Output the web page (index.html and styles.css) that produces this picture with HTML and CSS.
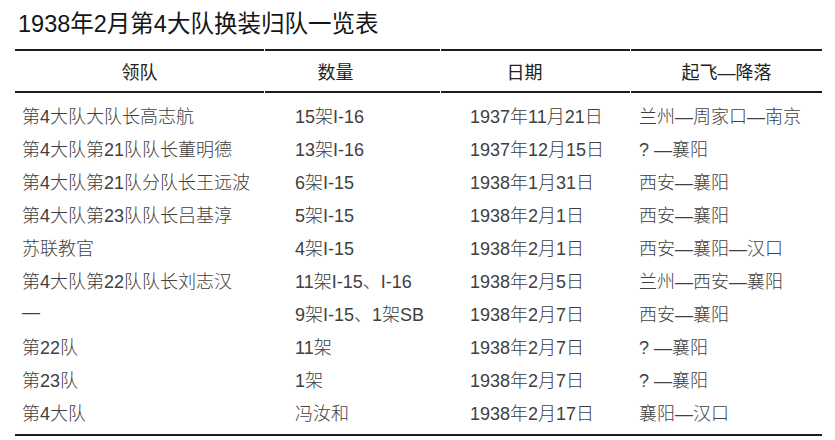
FILE: index.html
```html
<!DOCTYPE html>
<html lang="zh-CN">
<head>
<meta charset="utf-8">
<title>1938年2月第4大队换装归队一览表</title>
<link rel="stylesheet" href="styles.css">
</head>
<body>
<div class="page">
  <h1 class="title">1938年2月第4大队换装归队一览表</h1>
  <div class="table">
    <div class="row head">
      <div class="cell c1">领队</div>
      <div class="cell c2">数量</div>
      <div class="cell c3">日期</div>
      <div class="cell c4">起飞—降落</div>
    </div>
    <div class="body">
      <div class="row"><div class="cell c1">第4大队大队长高志航</div><div class="cell c2">15架I-16</div><div class="cell c3">1937年11月21日</div><div class="cell c4">兰州—周家口—南京</div></div>
      <div class="row"><div class="cell c1">第4大队第21队队长董明德</div><div class="cell c2">13架I-16</div><div class="cell c3">1937年12月15日</div><div class="cell c4">? —襄阳</div></div>
      <div class="row"><div class="cell c1">第4大队第21队分队长王远波</div><div class="cell c2">6架I-15</div><div class="cell c3">1938年1月31日</div><div class="cell c4">西安—襄阳</div></div>
      <div class="row"><div class="cell c1">第4大队第23队队长吕基淳</div><div class="cell c2">5架I-15</div><div class="cell c3">1938年2月1日</div><div class="cell c4">西安—襄阳</div></div>
      <div class="row"><div class="cell c1">苏联教官</div><div class="cell c2">4架I-15</div><div class="cell c3">1938年2月1日</div><div class="cell c4">西安—襄阳—汉口</div></div>
      <div class="row"><div class="cell c1">第4大队第22队队长刘志汉</div><div class="cell c2">11架I-15、I-16</div><div class="cell c3">1938年2月5日</div><div class="cell c4">兰州—西安—襄阳</div></div>
      <div class="row"><div class="cell c1">—</div><div class="cell c2">9架I-15、1架SB</div><div class="cell c3">1938年2月7日</div><div class="cell c4">西安—襄阳</div></div>
      <div class="row"><div class="cell c1">第22队</div><div class="cell c2">11架</div><div class="cell c3">1938年2月7日</div><div class="cell c4">? —襄阳</div></div>
      <div class="row"><div class="cell c1">第23队</div><div class="cell c2">1架</div><div class="cell c3">1938年2月7日</div><div class="cell c4">? —襄阳</div></div>
      <div class="row"><div class="cell c1">第4大队</div><div class="cell c2">冯汝和</div><div class="cell c3">1938年2月17日</div><div class="cell c4">襄阳—汉口</div></div>
    </div>
  </div>
</div>
</body>
</html>
```

FILE: styles.css
```css
html, body {
  margin: 0;
  padding: 0;
  background: #ffffff;
}

body {
  font-family: "Liberation Sans", "Noto Sans CJK SC", sans-serif;
  color: #333333;
}

.page {
  width: 835px;
  height: 440px;
  padding: 0 13px 0 15px;
  box-sizing: border-box;
  overflow: hidden;
}

.title {
  margin: 0;
  padding: 9px 0 0 3px;
  height: 40px;
  box-sizing: border-box;
  font-size: 23.5px;
  line-height: 30px;
  font-weight: 400;
  color: #151515;
}

.table {
  margin-top: 9px;
  width: 807px;
}

.row {
  display: grid;
  grid-template-columns: 250px 176px 190px 191px;
}

.head {
  height: 44px;
}

.head .cell {
  border-top: 2px solid #1c1c1c;
  border-bottom: 2px solid #1c1c1c;
  margin-right: 1px;
  display: flex;
  align-items: center;
  justify-content: center;
  font-size: 18px;
  color: #222222;
  font-weight: 400;
}

.head .cell.c4 {
  margin-right: 0;
}

.head .c2 {
  padding-right: 34px;
}

.head .c3 {
  padding-right: 22px;
}

.body {
  padding: 5px 0 6px;
  border-bottom: 2px solid #1c1c1c;
}

.body .row {
  height: 33px;
}

.body .cell {
  display: flex;
  align-items: center;
  font-size: 18px;
  font-weight: 300;
  color: #404040;
  white-space: nowrap;
}

.body .c1 {
  padding-left: 7px;
}

.body .c2 {
  padding-left: 30px;
}

.body .c3 {
  padding-left: 29px;
}

.body .c4 {
  padding-left: 8px;
}
```
